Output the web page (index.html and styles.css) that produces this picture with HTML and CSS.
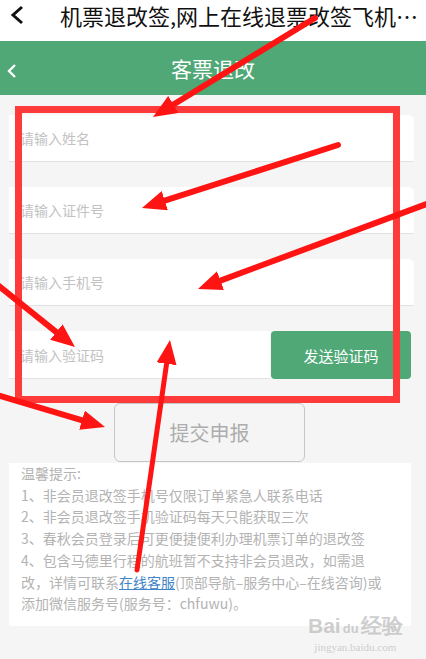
FILE: index.html
```html
<!DOCTYPE html>
<html>
<head>
    <meta charset="UTF-8">
    <link rel="stylesheet" href="styles.css">
</head>
<body>
    <div class="topbar">
        <svg class="top-back" width="16" height="20" viewBox="0 0 16 20"><path d="M13 2 L4 10 L13 18" fill="none" stroke="#111" stroke-width="3"/></svg>
        <span class="top-title">机票退改签,网上在线退票改签飞机…</span>
    </div>

    <div class="header">
        <svg class="back" width="12" height="16" viewBox="0 0 12 16"><path d="M9 2 L3 8 L9 14" fill="none" stroke="#fff" stroke-width="2.4"/></svg>
        <h3>客票退改</h3>
    </div>

    <div class="content">
        <div class="field"><input type="text" placeholder="请输入姓名"></div>
        <div class="field"><input type="text" placeholder="请输入证件号"></div>
        <div class="field"><input type="text" placeholder="请输入手机号"></div>
        <div class="field-row">
            <div class="field code"><input type="text" placeholder="请输入验证码"></div>
            <button class="btn-send">发送验证码</button>
        </div>

        <button class="btn-submit">提交申报</button>

        <div class="tips">
            <p>温馨提示:</p>
            <p>1、非会员退改签手机号仅限订单紧急人联系电话</p>
            <p>2、非会员退改签手机验证码每天只能获取三次</p>
            <p>3、春秋会员登录后可更便捷便利办理机票订单的退改签</p>
            <p>4、包含马德里行程的航班暂不支持非会员退改，如需退<br>改，详情可联系<a href="#">在线客服</a>(顶部导航–服务中心–在线咨询)或<br>添加微信服务号(服务号：chfuwu)。</p>
        </div>
    </div>

    <div class="watermark">
        <div class="wm-logo">Bai<span class="wm-du">du</span>经验</div>
        <div class="wm-url">jingyan.baidu.com</div>
    </div>

    <!-- red annotations on the screenshot -->
    <svg class="marks" width="426" height="659" viewBox="0 0 426 659">
        <defs>
            <marker id="head" viewBox="0 0 24 20" refX="10" refY="10" markerWidth="24" markerHeight="20" markerUnits="userSpaceOnUse" orient="auto">
                <path d="M0 0 L24 10 L0 20 z" fill="#ff1414"/>
            </marker>
        </defs>
        <rect x="18.5" y="109.5" width="378" height="290" fill="none" stroke="#ff3a3a" stroke-width="7"/>
        <g stroke="#ff1414" stroke-width="6" stroke-linecap="round" marker-end="url(#head)">
            <line x1="315" y1="18" x2="164.9" y2="109.7"/>
            <line x1="338" y1="145" x2="155.3" y2="203.7"/>
            <line x1="432" y1="202" x2="211.1" y2="284.1"/>
            <line x1="-6" y1="282" x2="64.1" y2="338.3"/>
            <line x1="-6" y1="394" x2="91.6" y2="423.1"/>
            <line x1="137" y1="570" x2="168" y2="353.9" stroke-width="5"/>
        </g>
    </svg>
</body>
</html>
```

FILE: styles.css
```css
body {
    width: 426px;
    height: 659px;
    margin: 0;
    padding: 0;
    position: relative;
    overflow: hidden;
    font-family: "Noto Sans CJK SC", "Noto Sans", sans-serif;
    background: #f5f5f5;
}

.topbar {
    height: 41px;
    background: #fff;
    display: flex;
    align-items: flex-start;
}

.top-back {
    margin: 5px 0 0 9px;
}

.top-title {
    margin-left: 35px;
    font-size: 22px;
    line-height: 30px;
    color: #111;
    white-space: nowrap;
}

.header {
    height: 54px;
    background: #4fa876;
    position: relative;
    display: flex;
    align-items: center;
    justify-content: center;
}

.header .back {
    position: absolute;
    left: 6px;
    top: 22px;
}

.header h3 {
    margin: 0;
    font-size: 21px;
    font-weight: normal;
    color: #fff;
}

.content {
    padding: 20px 12px 0 9px;
}

.field {
    background: #fff;
    height: 46px;
    border-bottom: 1px solid #e2e2e2;
    border-radius: 0 5px 0 0;
    margin-bottom: 25px;
}

.field input {
    width: 100%;
    height: 100%;
    border: none;
    outline: none;
    background: transparent;
    box-sizing: border-box;
    padding: 0 0 0 11px;
    font-family: inherit;
    font-size: 14px;
}

.field input::placeholder {
    color: #c2c2c2;
}

.field-row {
    display: flex;
    height: 48px;
}

.field-row .field {
    flex: 1;
    height: 47px;
    margin: 0;
    border-radius: 0;
}

.btn-send {
    width: 140px;
    margin: 0 3px 0 1px;
    border: none;
    border-radius: 4px;
    background: #4fa876;
    color: #fff;
    font-family: inherit;
    font-size: 15px;
}

.btn-submit {
    display: block;
    width: 191px;
    height: 59px;
    margin: 24px 0 0 105px;
    border: 1px solid #c6c6c6;
    border-radius: 6px;
    background: transparent;
    color: #adadad;
    font-family: inherit;
    font-size: 20px;
}

.tips {
    margin-top: 1px;
    width: 402px;
    box-sizing: border-box;
    background: #fff;
    padding: 0 10px 11px 12px;
    font-size: 14px;
    line-height: 21.7px;
    color: #b3b3b3;
    white-space: nowrap;
}

.tips p {
    margin: 0;
}

.tips a {
    color: #3f84c8;
}

.watermark {
    position: absolute;
    left: 308px;
    top: 614px;
    color: rgba(190, 190, 190, 0.75);
    text-align: center;
}

.wm-logo {
    font-family: "Liberation Sans", sans-serif;
    font-size: 21px;
    font-weight: bold;
    line-height: 24px;
}

.wm-du {
    font-size: 13px;
    margin: 0 2px;
}

.wm-url {
    font-family: "Liberation Serif", serif;
    font-size: 11px;
    line-height: 12px;
}

.marks {
    position: absolute;
    left: 0;
    top: 0;
    pointer-events: none;
}
```
